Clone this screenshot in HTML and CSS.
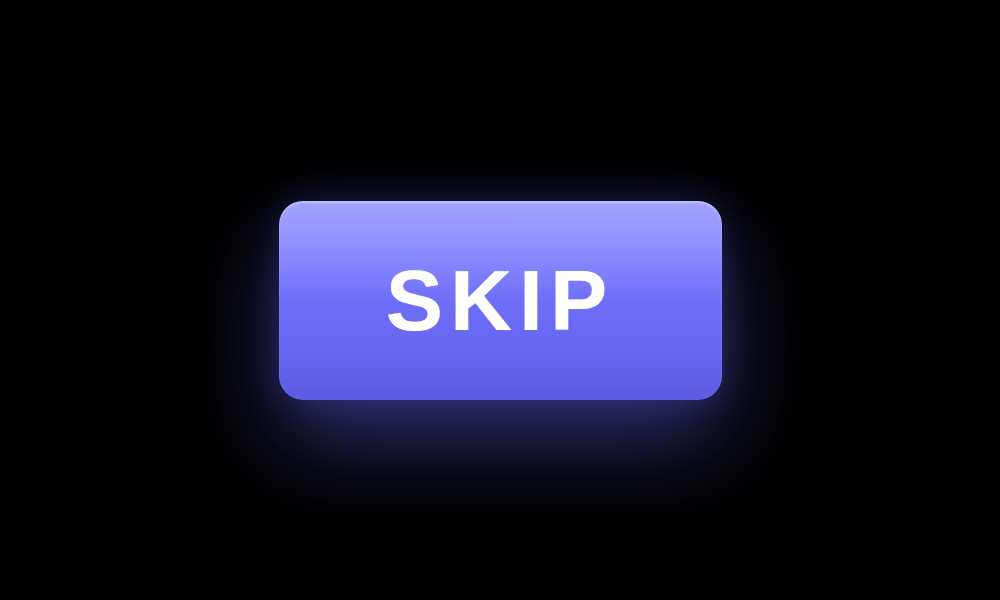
FILE: index.html
```html
<!DOCTYPE html>
<html>
<head>
  <meta charset="utf-8">
  <link rel="stylesheet" href="styles.css">
</head>
<body>
  <div class="stage">
    <button class="skip-btn">SKIP</button>
  </div>
</body>
</html>
```

FILE: styles.css
```css
html, body {
  margin: 0;
  height: 100%;
  background: #000;
}

.stage {
  height: 100%;
  display: flex;
  align-items: center;
  justify-content: center;
}

.skip-btn {
  width: 443px;
  height: 199px;
  border: none;
  border-radius: 24px;
  background: linear-gradient(180deg, #a3a3ff 0%, #9090ff 22%, #6e6ef8 50%, #6262ec 85%, #5c5ce2 100%);
  box-shadow: 0 40px 90px rgba(99, 102, 241, 0.45),
              0 0 36px rgba(99, 102, 241, 0.22),
              inset 0 2px 2px rgba(255, 255, 255, 0.3);
  color: #fff;
  font-family: "Liberation Sans", Arial, sans-serif;
  font-weight: 700;
  font-size: 86px;
  letter-spacing: 7px;
  padding: 0;
  text-shadow: 0 0 1px rgba(255, 255, 255, 0.6);
  cursor: pointer;
}
```
